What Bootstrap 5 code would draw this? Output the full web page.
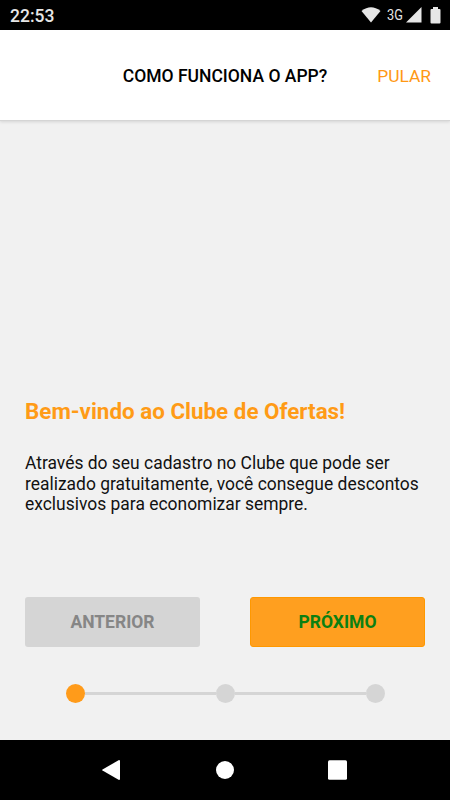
<!DOCTYPE html>
<html lang="pt-BR">
<head>
<meta charset="utf-8">
<meta name="viewport" content="width=device-width, initial-scale=1">
<title>Clube de Ofertas</title>
<link rel="stylesheet" href="https://cdn.jsdelivr.net/npm/bootstrap@5.3.0/dist/css/bootstrap.min.css">
<style>
body{font-family:Roboto,sans-serif;background:#f1f1f1;color:#111;width:450px;height:800px;overflow:hidden}
.status{height:30px;background:#000;color:#e6e6e6;font-size:17.5px;font-weight:500;padding:0 9px 0 10px}
.clock{padding-top:2px}
.net{font-size:15.5px;font-weight:400;line-height:20px;width:19px;margin-left:6px;transform:scaleX(.82);transform-origin:left}
.appbar{height:91px;display:grid;grid-template-columns:1fr 210px 1fr;box-shadow:0 1px 3px rgba(0,0,0,.12);border-bottom:1px solid #d5d5d5;padding-top:3px}
.title{font-size:17.5px;font-weight:500;white-space:nowrap;color:#000}
.skip{font-size:17.4px;font-weight:400;color:#ff9814;padding-right:19px}
.main{padding:276px 25px 0}
.accent{color:#ff9b16;font-size:22.4px;font-weight:700;line-height:28px;margin-bottom:28px}
.copy{font-size:17.46px;font-weight:400;line-height:20.5px;margin-bottom:82px;white-space:nowrap}
.act{width:175px;height:50px;border:0;border-radius:3px;font-size:17.5px;font-weight:700;padding:2px 0 0}
.prev,.prev:disabled{background:#d5d5d5;color:#868686;opacity:1}
.next,.next:hover{background:#ff9f1f;color:#0b8012;border:1px solid #ff9800}
.steps{margin:37px 40.5px 0 40.5px}
.dot{width:19px;height:19px;background:#d5d5d5}
.dot.on{background:#ff9b1a}
.line{height:3px;background:#d5d5d5}
.sys{height:60px;background:#000;padding:0 103px 0 102px}
.home{margin-left:1px}
</style>
<script src="https://cdn.jsdelivr.net/npm/bootstrap@5.3.0/dist/js/bootstrap.bundle.min.js"></script>
</head>
<body class="d-flex flex-column">
<div class="status d-flex align-items-center justify-content-between flex-shrink-0">
  <span class="clock">22:53</span>
  <div class="d-flex align-items-center">
    <svg width="20" height="16" viewBox="0 0 20 16" fill="#e6e6e6"><path d="M.5 4Q10-3.5 19.5 4L10 15.5Z"/></svg>
    <span class="net">3G</span>
    <svg width="16" height="16" viewBox="0 0 16 16" fill="#e6e6e6"><path d="M15.5 0V15.5H0Z"/></svg>
    <svg class="ms-2" width="11" height="17" viewBox="0 0 11 17" fill="#e6e6e6"><path d="M3 0h5v2h1.5q1 0 1 1v12.5q0 1-1 1h-8q-1 0-1-1V3q0-1 1-1H3Z"/></svg>
  </div>
</div>
<header class="appbar bg-white align-items-center flex-shrink-0"><span></span><div class="title text-center">COMO FUNCIONA O APP?</div><div class="skip text-end">PULAR</div></header>
<main class="main flex-grow-1">
  <h1 class="accent">Bem-vindo ao Clube de Ofertas!</h1>
  <p class="copy">Através do seu cadastro no Clube que pode ser<br>realizado gratuitamente, você consegue descontos<br>exclusivos para economizar sempre.</p>
  <div class="d-flex justify-content-between">
    <button class="btn act prev" disabled>ANTERIOR</button>
    <button class="btn act next">PRÓXIMO</button>
  </div>
  <div class="steps d-flex align-items-center">
    <span class="dot on rounded-circle"></span><span class="line flex-grow-1"></span><span class="dot rounded-circle"></span><span class="line flex-grow-1"></span><span class="dot rounded-circle"></span>
  </div>
</main>
<nav class="sys d-flex align-items-center justify-content-between flex-shrink-0">
  <svg width="18" height="20" viewBox="0 0 18 20" fill="#fff"><path d="M17 0q1 0 1 1v18q0 1-1 1L.5 10.5q-.6-.5 0-1Z"/></svg>
  <svg class="home" width="18" height="18" viewBox="0 0 18 18" fill="#fff"><circle cx="9" cy="9" r="9"/></svg>
  <svg width="19" height="20" viewBox="0 0 19 20" fill="#fff"><rect y=".3" width="19" height="19.4" rx="1.5"/></svg>
</nav>
</body>
</html>
